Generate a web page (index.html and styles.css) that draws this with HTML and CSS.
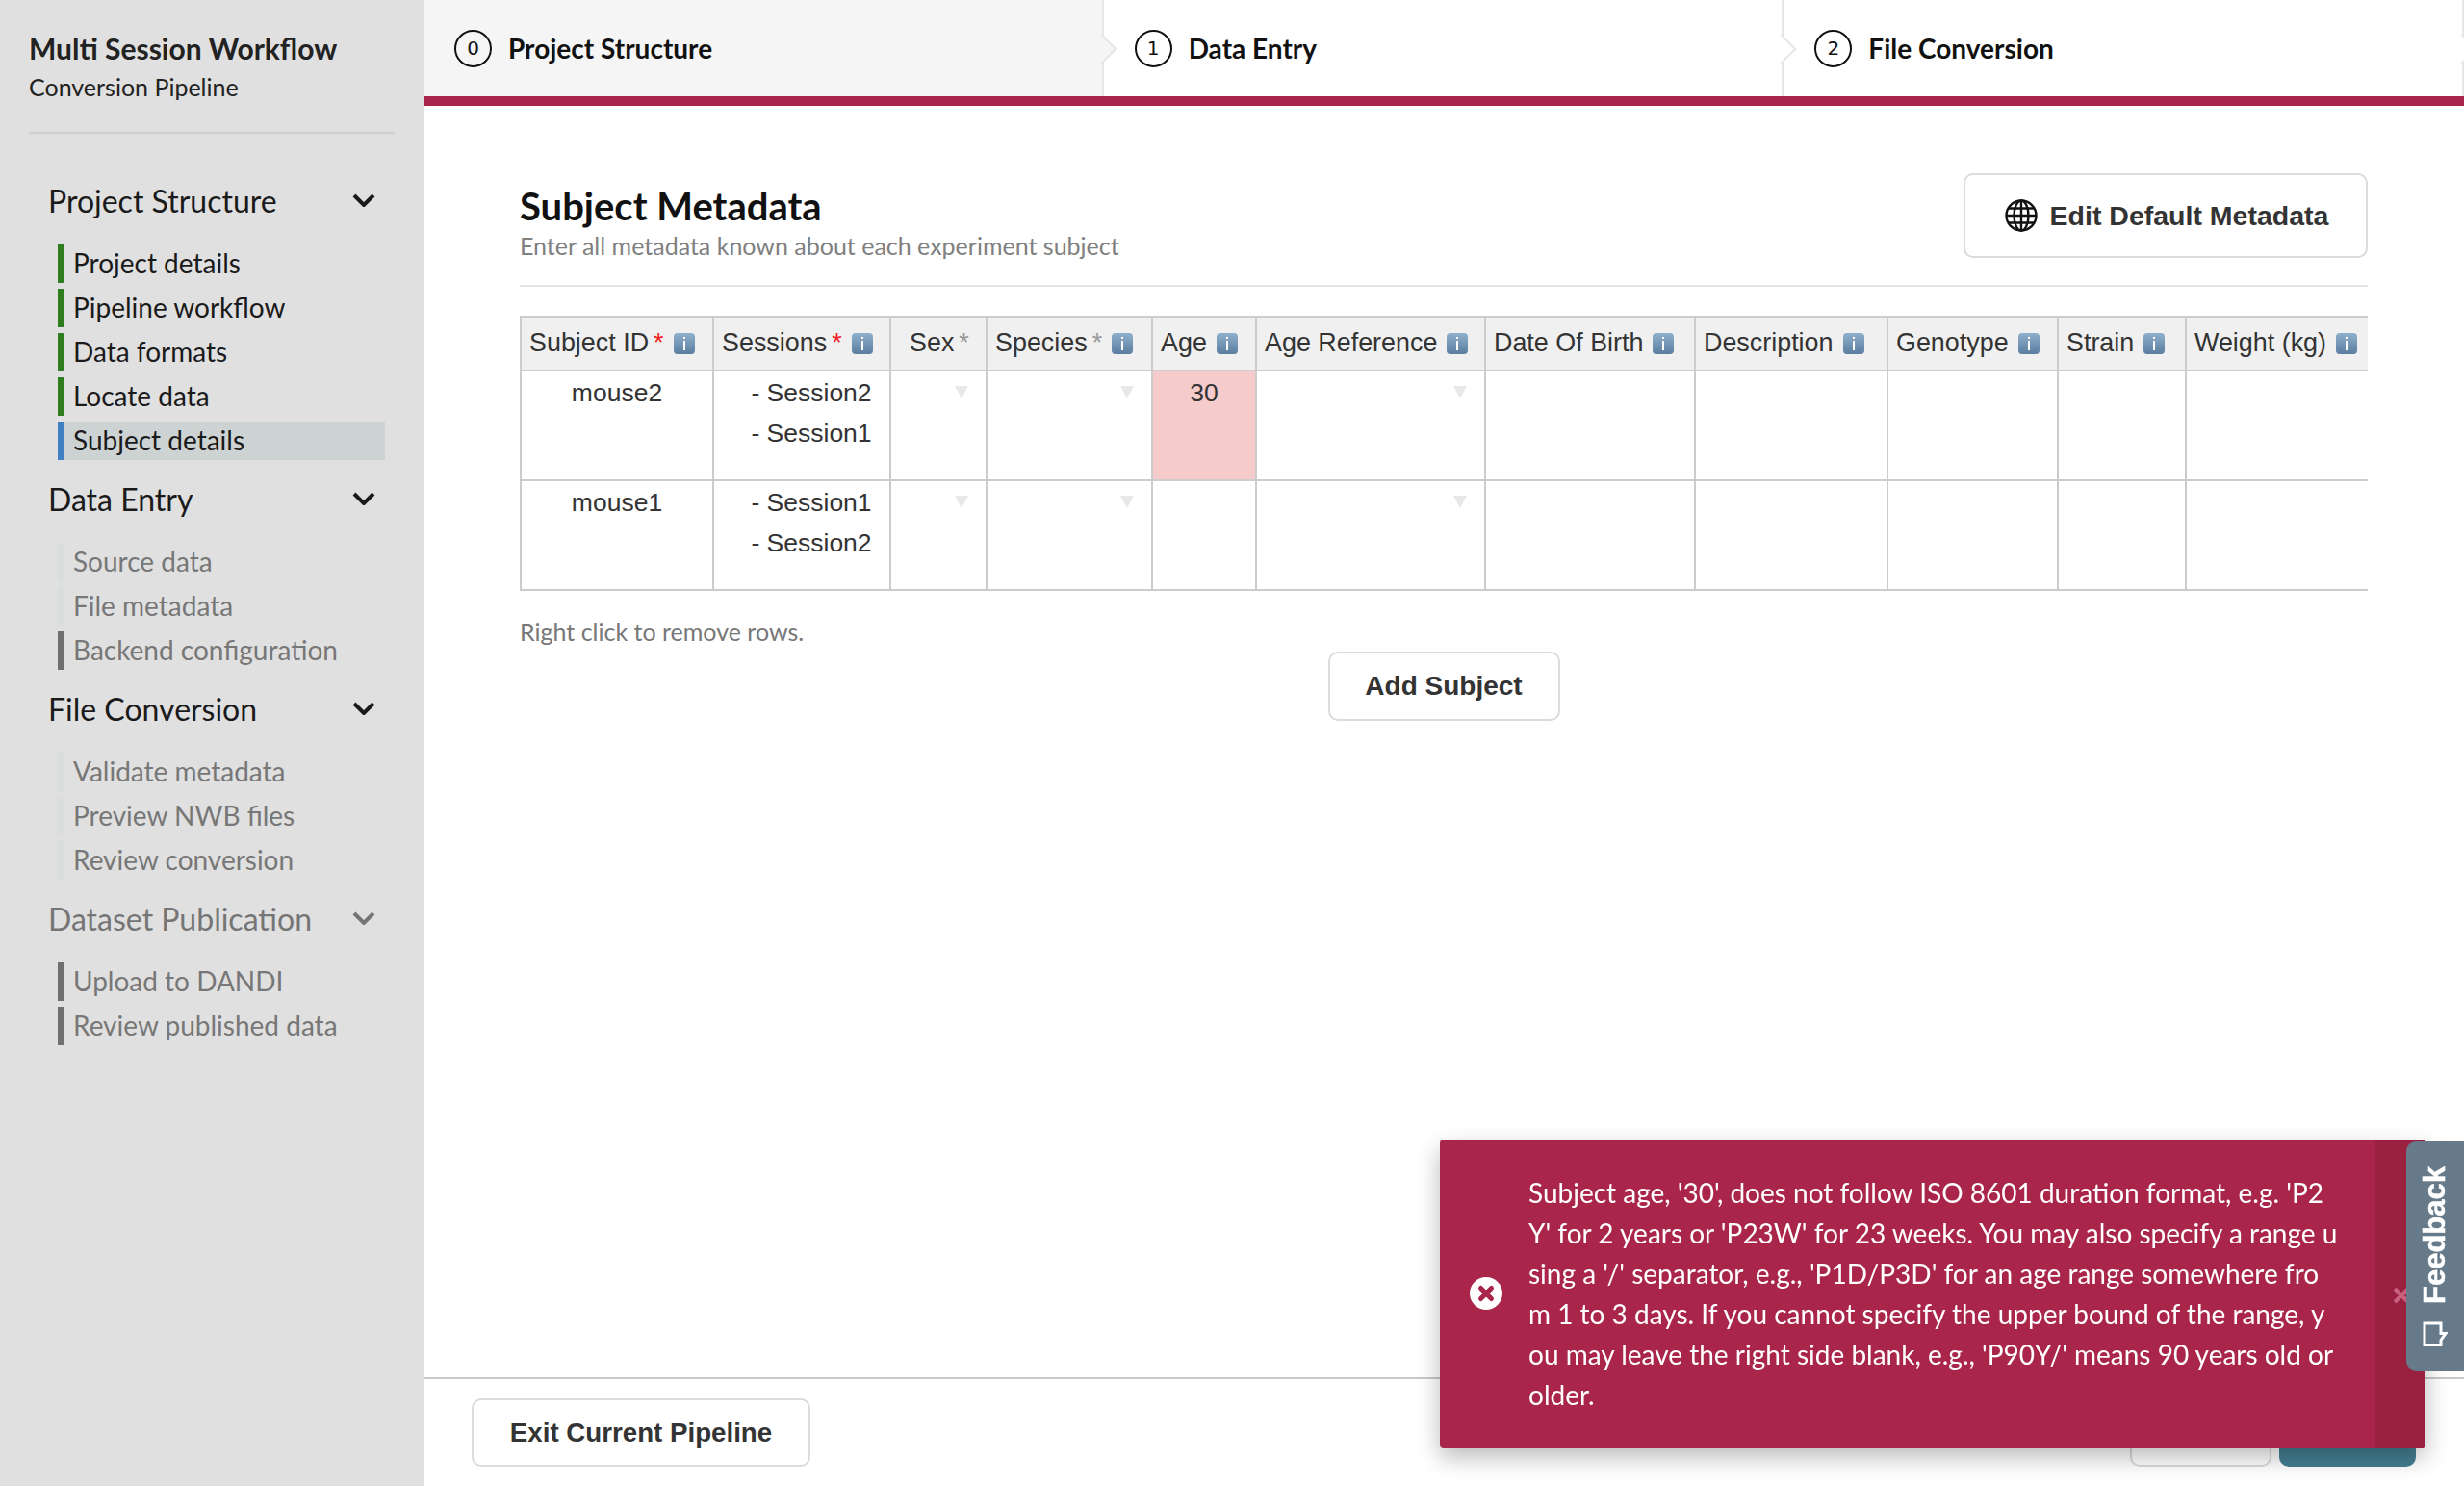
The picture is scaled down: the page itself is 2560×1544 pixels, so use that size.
FILE: index.html
```html
<!DOCTYPE html>
<html>
<head>
<meta charset="utf-8">
<title>Multi Session Workflow</title>
<link rel="stylesheet" href="styles.css">
</head>
<body>
<div class="app">
  <aside class="side">
    <div class="brand">
      <div class="brand-title">Multi Session Workflow</div>
      <div class="brand-sub">Conversion Pipeline</div>
    </div>
    <nav class="nav">
      <section class="group">
        <div class="group-head"><span>Project Structure</span><svg class="chev" viewBox="0 0 24 14"><path d="M2 2l10 10L22 2"/></svg></div>
        <a class="item done">Project details</a>
        <a class="item done">Pipeline workflow</a>
        <a class="item done">Data formats</a>
        <a class="item done">Locate data</a>
        <a class="item active">Subject details</a>
      </section>
      <section class="group">
        <div class="group-head"><span>Data Entry</span><svg class="chev" viewBox="0 0 24 14"><path d="M2 2l10 10L22 2"/></svg></div>
        <a class="item off">Source data</a>
        <a class="item off">File metadata</a>
        <a class="item grey">Backend configuration</a>
      </section>
      <section class="group">
        <div class="group-head"><span>File Conversion</span><svg class="chev" viewBox="0 0 24 14"><path d="M2 2l10 10L22 2"/></svg></div>
        <a class="item off">Validate metadata</a>
        <a class="item off">Preview NWB files</a>
        <a class="item off">Review conversion</a>
      </section>
      <section class="group muted">
        <div class="group-head"><span>Dataset Publication</span><svg class="chev" viewBox="0 0 24 14"><path d="M2 2l10 10L22 2"/></svg></div>
        <a class="item grey">Upload to DANDI</a>
        <a class="item grey">Review published data</a>
      </section>
    </nav>
  </aside>

  <main class="main">
    <header class="steps">
      <div class="step current"><span class="num">0</span><span>Project Structure</span></div>
      <div class="step"><span class="num">1</span><span>Data Entry</span></div>
      <div class="step"><span class="num">2</span><span>File Conversion</span></div>
    </header>

    <div class="content">
      <div class="page-head">
        <div>
          <h1>Subject Metadata</h1>
          <p class="lead">Enter all metadata known about each experiment subject</p>
        </div>
        <button class="btn btn-meta"><svg class="globe" viewBox="0 0 34 34"><circle cx="17" cy="17" r="15.500"/><ellipse cx="17" cy="17" rx="7.500" ry="15.500"/><path d="M17 1.500v31M1.500 17h31M4 9.500h26M4 24.500h26"/></svg>Edit Default Metadata</button>
      </div>

      <div class="table-wrap">
        <table class="grid">
          <colgroup>
            <col class="c1"><col class="c2"><col class="c3"><col class="c4"><col class="c5"><col class="c6"><col class="c7"><col class="c8"><col class="c9"><col class="c10"><col class="c11">
          </colgroup>
          <thead>
            <tr>
              <th>Subject ID<i class="req">*</i><b class="info"></b></th>
              <th>Sessions<i class="req">*</i><b class="info"></b></th>
              <th class="mid">Sex<i class="req soft">*</i></th>
              <th>Species<i class="req soft">*</i><b class="info"></b></th>
              <th>Age<b class="info"></b></th>
              <th>Age Reference<b class="info"></b></th>
              <th>Date Of Birth<b class="info"></b></th>
              <th>Description<b class="info"></b></th>
              <th>Genotype<b class="info"></b></th>
              <th>Strain<b class="info"></b></th>
              <th>Weight (kg)<b class="info"></b></th>
            </tr>
          </thead>
          <tbody>
            <tr>
              <td class="mid">mouse2</td>
              <td class="mid sess"><div>- Session2</div><div>- Session1</div></td>
              <td><span class="arrow"></span></td>
              <td><span class="arrow"></span></td>
              <td class="mid bad">30</td>
              <td><span class="arrow"></span></td>
              <td></td><td></td><td></td><td></td><td></td>
            </tr>
            <tr>
              <td class="mid">mouse1</td>
              <td class="mid sess"><div>- Session1</div><div>- Session2</div></td>
              <td><span class="arrow"></span></td>
              <td><span class="arrow"></span></td>
              <td></td>
              <td><span class="arrow"></span></td>
              <td></td><td></td><td></td><td></td><td></td>
            </tr>
          </tbody>
        </table>
      </div>

      <p class="hint">Right click to remove rows.</p>
      <div class="add-row"><button class="btn btn-add">Add Subject</button></div>
    </div>

    <footer class="foot">
      <button class="btn btn-exit">Exit Current Pipeline</button>
      <div class="foot-right">
        <button class="btn btn-back">Back</button>
        <button class="btn btn-next">Next</button>
      </div>
    </footer>
  </main>
</div>

<div class="toast">
  <svg class="toast-icon" viewBox="0 0 34 34"><circle cx="17" cy="17" r="17" fill="#fff"/><path d="M11.500 11.500l11 11M22.500 11.500l-11 11" stroke="#a9254a" stroke-width="5" stroke-linecap="round"/></svg>
  <div class="toast-text">Subject age, '30', does not follow ISO 8601 duration format, e.g. 'P2Y' for 2 years or 'P23W' for 23 weeks. You may also specify a range using a '/' separator, e.g., 'P1D/P3D' for an age range somewhere from 1 to 3 days. If you cannot specify the upper bound of the range, you may leave the right side blank, e.g., 'P90Y/' means 90 years old or older.</div>
  <div class="toast-close"><svg viewBox="0 0 18 18"><path d="M2 2l14 14M16 2L2 16"/></svg></div>
</div>

<div class="feedback">
  <span>Feedback</span>
  <svg viewBox="0 0 26 26"><path d="M2 24.500V2h17v10.500h5l-5 7v5z"/></svg>
</div>
</body>
</html>
```

FILE: styles.css
```css
* { box-sizing: border-box; }
html, body { margin: 0; height: 100%; overflow: hidden; }
body { font-family: Lato, "Noto Sans", sans-serif; color: #1a1a1a; background: #fff; }

.app { display: flex; height: 1544px; }

/* sidebar */
.side { width: 440px; flex: none; background: #e0e0e0; padding: 30px 30px 0; }
.brand { height: 109px; border-bottom: 2px solid #cfcfcf; }
.brand-title { font-size: 30px; font-weight: 700; line-height: 40px; color: #222; }
.brand-sub { font-size: 25px; line-height: 40px; color: #222; }
.nav { padding: 50px 10px 0 20px; }
.group { margin-bottom: 21px; }
.group-head { display: flex; justify-content: space-between; align-items: center; height: 38px; margin-bottom: 27px; padding-right: 10px; font-size: 32px; color: #1a1a1a; }
.chev { width: 24px; height: 14px; fill: none; stroke: #1a1a1a; stroke-width: 4; }
.muted .group-head { color: #757575; }
.muted .chev { stroke: #757575; }
.item { display: block; height: 40px; line-height: 38px; margin: 0 0 6px 10px; padding-left: 10px; border-left: 6px solid #ccc; font-size: 28px; color: #1a1a1a; }
.item.done { border-color: #2f7d1e; }
.item.active { border-color: #3f7fc4; background: #cdd3d3; }
.item.off { border-color: #d9dddd; color: #777; }
.item.grey { border-color: #707070; color: #777; }

/* main column */
.main { flex: 1; display: flex; flex-direction: column; min-width: 0; }
.steps { display: flex; height: 110px; flex: none; border-bottom: 10px solid #a9254a; }
.step { position: relative; flex: 1; display: flex; align-items: center; gap: 17px; padding-left: 32px; font-size: 28px; font-weight: 700; color: #111; border-right: 2px solid #e6e6e6; }
.step::after { content: ""; position: absolute; right: -11px; top: 40px; width: 20px; height: 20px; background: #fff; border: solid #e6e6e6; border-width: 2px 2px 0 0; transform: rotate(45deg); z-index: 1; }
.step.current { background: #f5f5f5; }
.step.current::after { background: #f5f5f5; }
.num { width: 39px; height: 39px; border: 2px solid #111; border-radius: 50%; display: flex; align-items: center; justify-content: center; font-size: 20px; font-weight: 400; font-family: "DejaVu Sans", sans-serif; }

.content { flex: 1; padding: 70px 100px 0; min-height: 0; }
.page-head { display: flex; justify-content: space-between; align-items: flex-start; height: 118px; border-bottom: 2px solid #e5e5e5; }
h1 { margin: 9px 0 0; font-size: 40px; line-height: 50px; font-weight: 700; color: #111; }
.lead { margin: 0; font-size: 25px; line-height: 32px; color: #808080; }

.btn { font-family: "Liberation Sans", sans-serif; font-weight: 700; color: #333; background: #fff; border: 2px solid #dbdbdb; border-radius: 10px; }
.btn-meta { display: flex; align-items: center; gap: 13px; width: 420px; height: 88px; padding-left: 8px; justify-content: center; font-size: 28.500px; }
.globe { width: 34px; height: 34px; fill: none; stroke: #111; stroke-width: 2.400; }

/* table */
.table-wrap { margin-top: 30px; overflow: hidden; }
.grid { table-layout: fixed; width: 1930px; border-collapse: collapse; font-family: "Liberation Sans", sans-serif; font-size: 26.500px; color: #333; }
.c1 { width: 200px; } .c2 { width: 184px; } .c3 { width: 100px; } .c4 { width: 172px; } .c5 { width: 108px; }
.c6 { width: 238px; } .c7 { width: 218px; } .c8 { width: 200px; } .c9 { width: 177px; } .c10 { width: 133px; } .c11 { width: 200px; }
.grid th, .grid td { border: 2px solid #ccc; vertical-align: top; overflow: hidden; white-space: nowrap; }
.grid th { height: 56px; padding: 0 0 0 8px; background: #f0f0f0; font-size: 26.900px; font-weight: 400; line-height: 52px; text-align: left; }
.grid td { position: relative; height: 114px; padding: 1px 6px 0; line-height: 42px; }
.grid td.mid { text-align: center; }
.grid td.sess { padding-left: 26px; }
.grid th.mid { padding-left: 19px; }
.grid td.bad { background: #f6cbcc; }
.req { font-style: normal; color: #f01e1e; margin-left: 5px; }
.req.soft { color: #999; }
.info { display: inline-block; width: 22px; height: 22px; margin-left: 10px; vertical-align: -3px; border-radius: 4px; background: linear-gradient(#8fb0cc, #5a7da0); position: relative; }
.info::before { content: ""; position: absolute; left: 10px; top: 4px; width: 2px; height: 2px; background: #fff; }
.info::after { content: ""; position: absolute; left: 10px; top: 8px; width: 2px; height: 10px; background: #fff; }
.arrow { position: absolute; right: 18px; top: 15px; width: 0; height: 0; border: solid transparent; border-width: 13px 7px 0; border-top-color: #e8e8e8; }

.hint { margin: 28px 0 0; font-size: 25px; line-height: 28px; color: #777; }
.add-row { display: flex; justify-content: center; margin-top: 7px; }
.btn-add { width: 241px; height: 72px; font-size: 28px; }

/* footer */
.foot { flex: none; height: 113px; border-top: 2px solid #c8c8c8; background: #fff; display: flex; justify-content: space-between; padding: 20px 50px 0; }
.foot .btn { height: 71px; font-size: 27.700px; }
.btn-exit { width: 352px; }
.foot-right { display: flex; gap: 8px; }
.btn-back { width: 147px; }
.btn-next { width: 142px; background: #437f92; border-color: #437f92; color: #fff; }

/* overlays */
.toast { position: fixed; left: 1496px; top: 1184px; width: 1024px; height: 320px; display: flex; align-items: center; background: #a9254a; border-radius: 4px; box-shadow: 0 10px 24px rgba(0,0,0,.28); color: #fff; }
.toast-icon { width: 34px; height: 34px; flex: none; margin-left: 31px; }
.toast-text { width: 841px; margin-left: 27px; font-size: 28px; line-height: 42px; word-break: break-all; }
.toast-close { position: absolute; right: 0; top: 0; bottom: 0; width: 52px; background: #99213f; border-radius: 0 4px 4px 0; }
.toast-close svg { position: absolute; left: 18px; top: 153px; width: 18px; height: 18px; fill: none; stroke: #c9607d; stroke-width: 4; }
.feedback { position: fixed; right: 0; top: 1186px; width: 60px; height: 238px; background: #667a8a; border-radius: 10px 0 0 10px; display: flex; flex-direction: column; align-items: center; justify-content: flex-start; padding-top: 26px; gap: 18px; color: #fff; }
.feedback span { writing-mode: vertical-rl; transform: rotate(180deg); font-family: "Liberation Sans", sans-serif; font-weight: 700; font-size: 31px; line-height: 40px; -webkit-text-stroke: .5px #fff; }
.feedback svg { width: 26px; height: 26px; fill: none; stroke: #fff; stroke-width: 3; }
```
